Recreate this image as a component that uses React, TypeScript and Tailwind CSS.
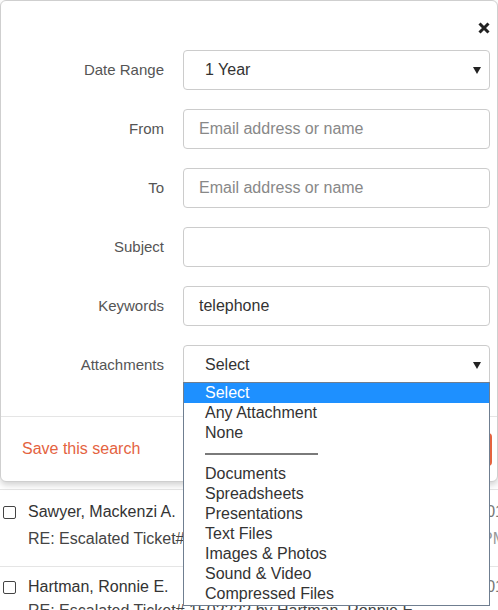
import React from "react";

const font = { fontFamily: '"Liberation Sans", Arial, sans-serif' };

function Row({ label, children }: { label: string; children: React.ReactNode }) {
  return (
    <div className="grid grid-cols-[163px_307px] gap-x-[19px] items-center h-[40px]">
      <div className="text-right text-[15px] text-[#555]">{label}</div>
      <div className="h-[40px] relative">{children}</div>
    </div>
  );
}

function TextInput({ value, placeholder }: { value?: string; placeholder?: string }) {
  return (
    <div className="h-[40px] border border-[#ccc] rounded-[4px] flex items-center pl-[15px] text-[16px]">
      {value ? (
        <span className="text-[#333]">{value}</span>
      ) : (
        <span className="text-[#888]">{placeholder}</span>
      )}
    </div>
  );
}

function Select({ value }: { value: string }) {
  return (
    <div className="h-[40px] border border-[#ccc] rounded-[4px] flex items-center justify-between pl-[21px] pr-[8px] text-[16px] text-[#333]">
      <span>{value}</span>
      <svg width="8" height="8" viewBox="0 0 8 8">
        <path d="M0 1 L8 1 L4 8 Z" fill="#222" />
      </svg>
    </div>
  );
}

const options = [
  "Any Attachment",
  "None",
  "---",
  "Documents",
  "Spreadsheets",
  "Presentations",
  "Text Files",
  "Images & Photos",
  "Sound & Video",
  "Compressed Files",
];

export default function App() {
  return (
    <div className="w-[498px] h-[610px] overflow-hidden bg-white relative" style={font}>
      {/* modal */}
      <div className="h-[482px] border border-[#cfcfcf] rounded-[6px] shadow-[0_3px_6px_rgba(0,0,0,0.18)] bg-white flex flex-col relative z-10">
        <div className="h-[49px] flex justify-end items-start pt-[21px] pr-[7px]">
          <svg width="12" height="12" viewBox="0 0 12 12">
            <path d="M1.5 1.5 L10.5 10.5 M10.5 1.5 L1.5 10.5" stroke="#222" strokeWidth="3" strokeLinecap="butt" />
          </svg>
        </div>
        <div className="flex flex-col gap-[19px] pb-[31px]">
          <Row label="Date Range">
            <Select value="1 Year" />
          </Row>
          <Row label="From">
            <TextInput placeholder="Email address or name" />
          </Row>
          <Row label="To">
            <TextInput placeholder="Email address or name" />
          </Row>
          <Row label="Subject">
            <TextInput />
          </Row>
          <Row label="Keywords">
            <TextInput value="telephone" />
          </Row>
          <Row label="Attachments">
            <Select value="Select" />
            {/* open dropdown list */}
            <div className="absolute left-0 top-[37px] w-[307px] h-[224px] border border-[#6f7e90] bg-white z-20 text-[16px] text-[#333] leading-[20px]">
              <div className="h-[20px] bg-[#1e90ff] text-white pl-[21px]">Select</div>
              {options.map((o) =>
                o === "---" ? (
                  <div key={o} className="h-[21px] pl-[21px] flex items-center">
                    <div className="w-[113px] h-[2px] bg-[#7a7a7a]" />
                  </div>
                ) : (
                  <div key={o} className="h-[20px] pl-[21px]">
                    {o}
                  </div>
                )
              )}
            </div>
          </Row>
        </div>
        <div className="border-t border-[#e5e5e5] flex-1 flex items-center justify-between pl-[21px] pr-[5px]">
          <span className="text-[16px] text-[#e4633f]">Save this search</span>
          <div className="w-[120px] h-[33px] rounded-[4px] bg-[#e4633f]" />
        </div>
      </div>

      {/* background list */}
      <div className="mt-[7px] border-t border-[#e5e5e5] text-[16px]">
        <div className="pt-[11px] pb-[16px] border-b border-[#e5e5e5]">
          <div className="h-[22px] flex items-center justify-between">
            <div className="flex items-center">
              <div className="w-[13px] h-[13px] border border-[#444] rounded-[2px] ml-[3px] mr-[12px]" />
              <span className="text-[#333]">Sawyer, Mackenzi A.</span>
            </div>
            <span className="text-[#777] -mr-[6px]">10/01</span>
          </div>
          <div className="h-[22px] mt-[5px] pl-[28px] flex items-center justify-between">
            <span className="text-[#444]">RE: Escalated Ticket# 1502222 by Sawyer</span>
            <span className="text-[#999] -mr-[8px]">PM</span>
          </div>
        </div>
        <div className="pt-[9px]">
          <div className="h-[22px] flex items-center justify-between">
            <div className="flex items-center">
              <div className="w-[13px] h-[13px] border border-[#444] rounded-[2px] ml-[3px] mr-[12px]" />
              <span className="text-[#333]">Hartman, Ronnie E.</span>
            </div>
            <span className="text-[#777] -mr-[6px]">10/01</span>
          </div>
          <div className="h-[22px] mt-[2px] pl-[28px] flex items-center justify-between">
            <span className="text-[#444]">RE: Escalated Ticket# 1502222 by Hartman, Ronnie E.</span>
          </div>
        </div>
      </div>
    </div>
  );
}
